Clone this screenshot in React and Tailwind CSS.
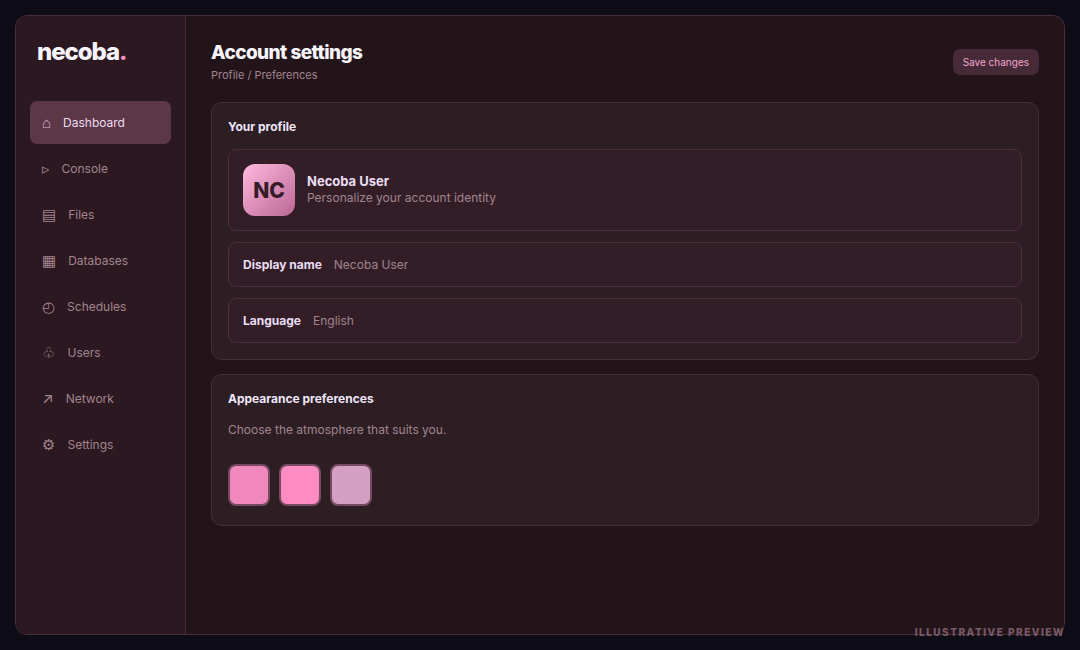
import React, { useState } from 'react';

const navItems = [
    { icon: '⌂', label: 'Dashboard' },
    { icon: '▹', label: 'Console' },
    { icon: '▤', label: 'Files' },
    { icon: '▦', label: 'Databases' },
    { icon: '◴', label: 'Schedules' },
    { icon: '♧', label: 'Users' },
    { icon: '↗', label: 'Network' },
    { icon: '⚙', label: 'Settings' },
];

const swatches = [
    { name: 'Rose', color: 'bg-[#f088bd]' },
    { name: 'Bubblegum', color: 'bg-[#fc8cc2]' },
    { name: 'Mauve', color: 'bg-[#d3a0c3]' },
];

const Sidebar = () => {
    const [active, setActive] = useState('Dashboard');

    return (
        <aside className="w-[170px] shrink-0 border-r border-[#472f39] bg-[#2c1820] px-3.5 pt-5">
            <div className="px-[7px] text-2xl font-extrabold tracking-[-0.045em] text-[#f8f4ff]">
                necoba<span className="text-[#f792c6]">.</span>
            </div>
            <nav className="mt-[33px] flex flex-col gap-[3px]">
                {navItems.map((item) => (
                    <a
                        key={item.label}
                        href={`#${item.label.toLowerCase()}`}
                        onClick={() => setActive(item.label)}
                        className={`flex h-[43px] items-center gap-3 rounded-[7px] px-3 text-xs ${
                            active === item.label ? 'bg-[#5c3747] text-[#eedcf3]' : 'text-[#a1858f]'
                        }`}
                    >
                        <span aria-hidden="true" className={`text-[15px] ${active === item.label ? 'text-[#dfb5ce]' : ''}`}>
                            {item.icon}
                        </span>
                        {item.label}
                    </a>
                ))}
            </nav>
        </aside>
    );
};

const Card = ({ title, children }) => (
    <section className="rounded-[11px] border border-[#453039] bg-[#2d1e24] p-4">
        <h2 className="mb-[15px] text-xs leading-[15px] font-bold text-[#eee6fa]">{title}</h2>
        {children}
    </section>
);

const Row = ({ children }) => (
    <div className="flex items-center gap-3 rounded-lg border border-[#492f39] bg-[#331e27] p-3.5 text-xs leading-[15px]">
        {children}
    </div>
);

const App = () => {
    return (
        <div className="relative flex min-h-screen bg-[#0e0c17] p-[15px] font-['Inter','Liberation_Sans','DejaVu_Sans',sans-serif]">
            <div className="flex flex-1 overflow-hidden rounded-xl border border-[#472f39] bg-[#23141a]">
                <Sidebar />
                <main className="flex min-w-0 flex-1 flex-col gap-3.5 px-[25px] pt-[25px]">
                    <header className="mb-1.5 flex items-center justify-between">
                        <div>
                            <h1 className="text-[19px] leading-6 font-extrabold tracking-[-0.03em] text-[#f8f4ff]">Account settings</h1>
                            <p className="mt-1 text-[11px] leading-[13px] text-[#a1858f]">Profile / Preferences</p>
                        </div>
                        <button type="button" className="rounded-[7px] bg-[#472a38] px-2.5 py-[7px] text-[10px] leading-3 text-[#f2a6cf]">
                            Save changes
                        </button>
                    </header>

                    <Card title="Your profile">
                        <div className="flex flex-col gap-[11px]">
                            <Row>
                                <div className="flex size-[52px] items-center justify-center rounded-xl bg-linear-135 from-[#ffb9df] to-[#ba6894] text-[21px] font-extrabold text-[#351c28]">
                                    NC
                                </div>
                                <div className="pb-0.5">
                                    <div className="text-[13px] leading-4 font-bold text-[#e9def6]">Necoba User</div>
                                    <div className="mt-px text-[#a1858f]">Personalize your account identity</div>
                                </div>
                            </Row>
                            <Row>
                                <span className="font-bold text-[#e9def6]">Display name</span>
                                <span className="text-[#a1858f]">Necoba User</span>
                            </Row>
                            <Row>
                                <span className="font-bold text-[#e9def6]">Language</span>
                                <span className="text-[#a1858f]">English</span>
                            </Row>
                        </div>
                    </Card>

                    <Card title="Appearance preferences">
                        <p className="text-xs leading-[18px] text-[#a1858f]">Choose the atmosphere that suits you.</p>
                        <div className="mt-[25px] mb-[3px] flex gap-[9px]">
                            {swatches.map((swatch) => (
                                <button
                                    key={swatch.name}
                                    type="button"
                                    aria-label={swatch.name}
                                    className={`size-[42px] rounded-lg border-2 border-[#75495f] ${swatch.color}`}
                                />
                            ))}
                        </div>
                    </Card>
                </main>
            </div>
            <div className="absolute right-[15px] bottom-3 text-[10px] leading-3 font-extrabold tracking-[0.15em] text-[#785a67]">
                ILLUSTRATIVE PREVIEW
            </div>
        </div>
    );
};

export default App;
